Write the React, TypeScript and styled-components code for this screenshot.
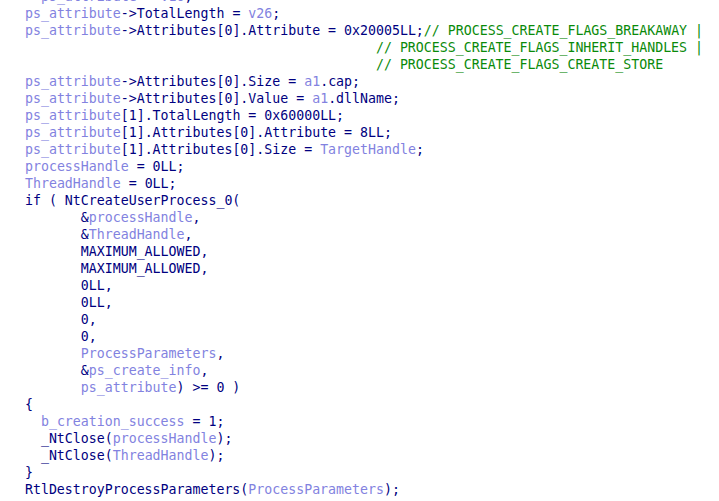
import React from "react";
import styled, { createGlobalStyle } from "styled-components";

const Global = createGlobalStyle`
  html, body { margin: 0; padding: 0; background: #ffffff; }
  body { overflow: hidden; }
`;

const Viewport = styled.div`
  width: 719px;
  height: 501px;
  overflow: hidden;
  background: #ffffff;
`;

const Code = styled.pre`
  margin: -12px 0 0 0;
  padding: 0 0 0 9px;
  font-family: "DejaVu Sans Mono", "Liberation Mono", monospace;
  font-size: 13.25px;
  line-height: 17px;
  color: #000080;
  white-space: pre;
`;

const Line = styled.div`
  height: 17px;
`;

type Kind = "v" | "p" | "c";

const Tok = styled.span<{ $k: Kind }>`
  color: ${(p) => (p.$k === "v" ? "#8282e0" : p.$k === "c" ? "#0a8a0a" : "#000080")};
`;

type Seg = [Kind, string];

const lines: Seg[][] = [
  [["p", "    "], ["v", "ps_attribute"], ["p", " = "], ["v", "v16"], ["p", ";"]],
  [["p", "  "], ["v", "ps_attribute"], ["p", "->TotalLength = "], ["v", "v26"], ["p", ";"]],
  [["p", "  "], ["v", "ps_attribute"], ["p", "->Attributes[0].Attribute = 0x20005LL;"], ["c", "// PROCESS_CREATE_FLAGS_BREAKAWAY |"]],
  [["p", " ".repeat(46)], ["c", "// PROCESS_CREATE_FLAGS_INHERIT_HANDLES |"]],
  [["p", " ".repeat(46)], ["c", "// PROCESS_CREATE_FLAGS_CREATE_STORE"]],
  [["p", "  "], ["v", "ps_attribute"], ["p", "->Attributes[0].Size = "], ["v", "a1"], ["p", ".cap;"]],
  [["p", "  "], ["v", "ps_attribute"], ["p", "->Attributes[0].Value = "], ["v", "a1"], ["p", ".dllName;"]],
  [["p", "  "], ["v", "ps_attribute"], ["p", "[1].TotalLength = 0x60000LL;"]],
  [["p", "  "], ["v", "ps_attribute"], ["p", "[1].Attributes[0].Attribute = 8LL;"]],
  [["p", "  "], ["v", "ps_attribute"], ["p", "[1].Attributes[0].Size = "], ["v", "TargetHandle"], ["p", ";"]],
  [["p", "  "], ["v", "processHandle"], ["p", " = 0LL;"]],
  [["p", "  "], ["v", "ThreadHandle"], ["p", " = 0LL;"]],
  [["p", "  if ( NtCreateUserProcess_0("]],
  [["p", "         &"], ["v", "processHandle"], ["p", ","]],
  [["p", "         &"], ["v", "ThreadHandle"], ["p", ","]],
  [["p", "         MAXIMUM_ALLOWED,"]],
  [["p", "         MAXIMUM_ALLOWED,"]],
  [["p", "         0LL,"]],
  [["p", "         0LL,"]],
  [["p", "         0,"]],
  [["p", "         0,"]],
  [["p", "         "], ["v", "ProcessParameters"], ["p", ","]],
  [["p", "         &"], ["v", "ps_create_info"], ["p", ","]],
  [["p", "         "], ["v", "ps_attribute"], ["p", ") >= 0 )"]],
  [["p", "  {"]],
  [["p", "    "], ["v", "b_creation_success"], ["p", " = 1;"]],
  [["p", "    _NtClose("], ["v", "processHandle"], ["p", ");"]],
  [["p", "    _NtClose("], ["v", "ThreadHandle"], ["p", ");"]],
  [["p", "  }"]],
  [["p", "  RtlDestroyProcessParameters("], ["v", "ProcessParameters"], ["p", ");"]],
];

export default function App() {
  return (
    <Viewport>
      <Global />
      <Code>
        {lines.map((segs, i) => (
          <Line key={i}>
            {segs.map(([k, t], j) => (
              <Tok key={j} $k={k}>
                {t}
              </Tok>
            ))}
          </Line>
        ))}
      </Code>
    </Viewport>
  );
}
